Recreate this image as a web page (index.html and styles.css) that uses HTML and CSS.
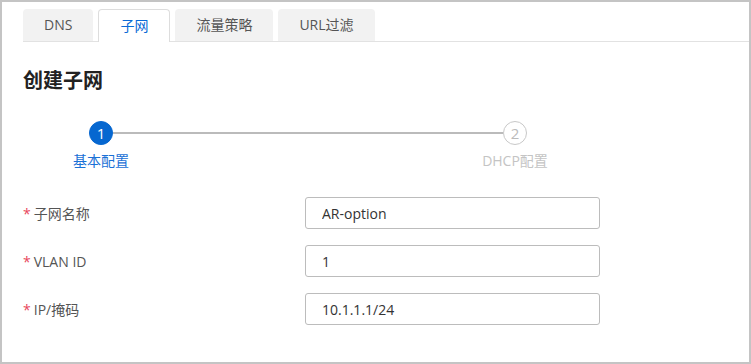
FILE: index.html
```html
<!DOCTYPE html>
<html lang="zh-CN">

<head>
  <meta charset="UTF-8">
  <meta name="viewport" content="width=device-width, initial-scale=1.0">
  <title>创建子网</title>
  <link rel="stylesheet" href="styles.css">
</head>

<body>
  <div class="frame">
    <ul class="tabs">
      <li class="tab">DNS</li>
      <li class="tab active">子网</li>
      <li class="tab">流量策略</li>
      <li class="tab">URL过滤</li>
    </ul>

    <main class="content">
      <h1 class="title">创建子网</h1>

      <div class="steps">
        <div class="step done">
          <span class="step-num">1</span>
          <span class="step-label">基本配置</span>
        </div>
        <div class="step-line"></div>
        <div class="step">
          <span class="step-num">2</span>
          <span class="step-label">DHCP配置</span>
        </div>
      </div>

      <form class="form">
        <div class="form-row">
          <label class="form-label"><span class="req">*</span>子网名称</label>
          <input class="form-input" type="text" value="AR-option">
        </div>
        <div class="form-row">
          <label class="form-label"><span class="req">*</span>VLAN ID</label>
          <input class="form-input" type="text" value="1">
        </div>
        <div class="form-row">
          <label class="form-label"><span class="req">*</span>IP/掩码</label>
          <input class="form-input" type="text" value="10.1.1.1/24">
        </div>
      </form>
    </main>
  </div>
</body>

</html>
```

FILE: styles.css
```css
/* General Reset */
body,
html {
  margin: 0;
  padding: 0;
  font-family: 'Open Sans', 'Noto Sans CJK SC', sans-serif;
  font-size: 14px;
  color: #555;
  background: #fff;
}

.frame {
  width: 751px;
  height: 364px;
  box-sizing: border-box;
  border: 2px solid #c4c4c4;
  overflow: hidden;
}

/* Tabs */
.tabs {
  list-style: none;
  display: flex;
  gap: 5px;
  margin: 0 0 0 21px;
  padding: 7px 0 0 0;
  border-bottom: 1px solid #e2e2e2;
}

.tab {
  height: 32px;
  line-height: 32px;
  padding: 0 21px;
  box-sizing: border-box;
  background-color: #f2f2f2;
  border-radius: 4px 4px 0 0;
  color: #555;
}

.tab.active {
  background-color: #fff;
  border: 1px solid #ddd;
  border-bottom: none;
  height: 33px;
  margin-bottom: -1px;
  line-height: 31px;
  color: #0a6ad6;
}

/* Content */
.content {
  padding: 0 21px;
}

.title {
  margin: 25px 0 0 0;
  font-size: 20px;
  line-height: 28px;
  font-weight: bold;
  color: #222;
}

/* Steps */
.steps {
  display: flex;
  margin: 26px 0 0 38px;
}

.step {
  width: 80px;
  display: flex;
  flex-direction: column;
  align-items: center;
}

.step-num {
  width: 24px;
  height: 24px;
  box-sizing: border-box;
  border: 1px solid #c8c8c8;
  border-radius: 50%;
  display: flex;
  align-items: center;
  justify-content: center;
  color: #bbb;
  font-size: 15px;
}

.step-label {
  margin-top: 7px;
  line-height: 18px;
  color: #c4c4c4;
}

.step.done .step-num {
  background-color: #0667d0;
  border-color: #0667d0;
  color: #fff;
}

.step.done .step-label {
  color: #1a71d6;
}

.step-line {
  flex: none;
  width: 390px;
  height: 2px;
  margin: 11px -28px 0 -28px;
  background-color: #bbb;
}

/* Form */
.form {
  margin-top: 27px;
  display: flex;
  flex-direction: column;
  gap: 16px;
}

.form-row {
  display: flex;
  align-items: center;
}

.form-label {
  width: 282px;
  color: #555;
}

.req {
  color: #e8465c;
  margin-right: 3px;
}

.form-input {
  width: 295px;
  height: 32px;
  box-sizing: border-box;
  padding: 0 16px;
  border: 1px solid #bcbcbc;
  border-radius: 3px;
  font-family: inherit;
  font-size: 14px;
  color: #333;
  outline: none;
}
```
